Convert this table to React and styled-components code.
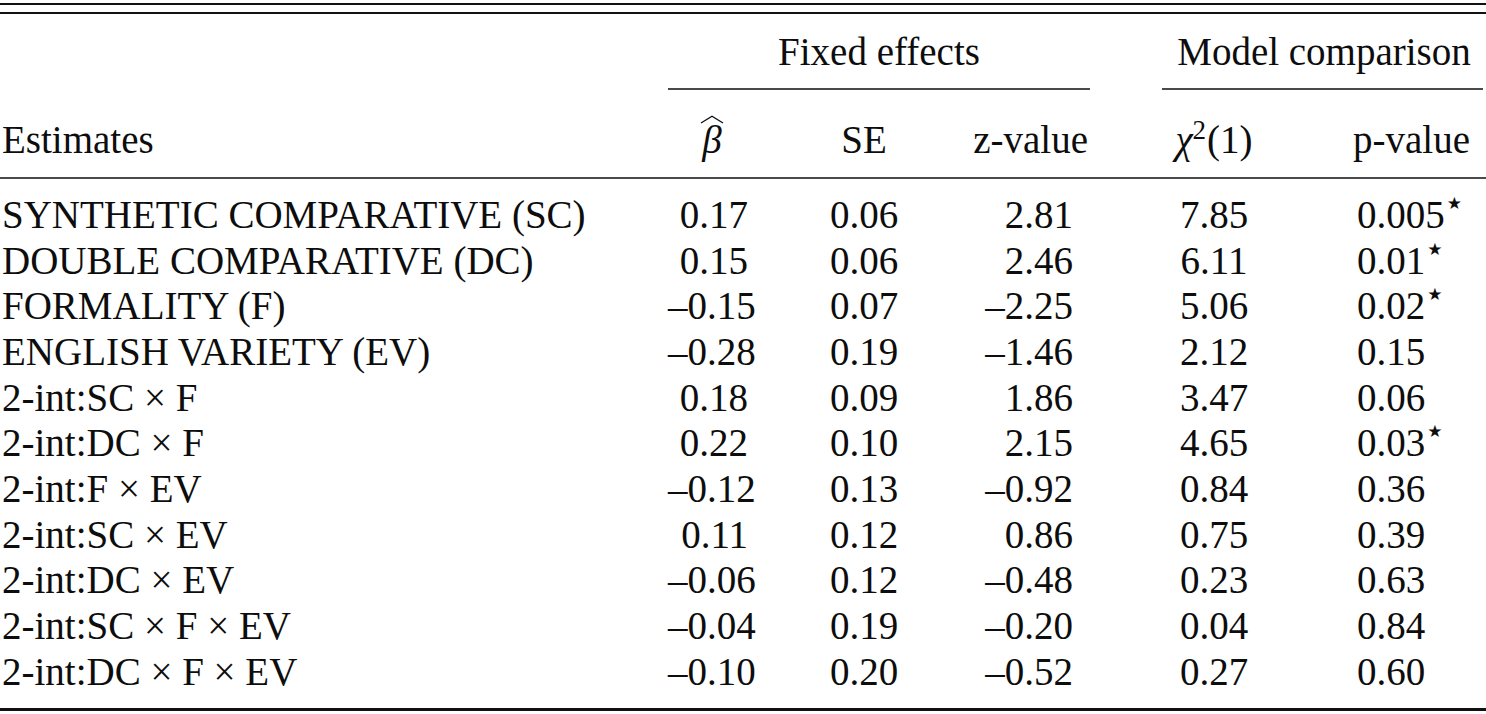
import styled, { createGlobalStyle } from "styled-components";

const GlobalStyle = createGlobalStyle`
  html, body {
    margin: 0;
    padding: 0;
    background: #fff;
  }
  body {
    font-family: "Liberation Serif", "Times New Roman", serif;
    color: #0d0d0d;
  }
`;

// shared column template: label | beta | SE | z | gap | chi2 | p
const COLUMNS = "668px 88px 216px 118px 72px 104px 220px";

const Table = styled.div`
  width: 1486px;
  display: flex;
  flex-direction: column;
  font-size: 39px;
`;

const Rule = styled.div`
  height: ${(p) => p.$h}px;
  margin-top: ${(p) => p.$top}px;
  background: ${(p) => p.$color || "#111"};
`;

const Row = styled.div`
  display: grid;
  grid-template-columns: ${COLUMNS};
  height: 45.7px;
  line-height: 45.7px;
  margin-top: ${(p) => p.$top || 0}px;
  white-space: nowrap;
`;

const RuleRow = styled.div`
  display: grid;
  grid-template-columns: ${COLUMNS};
  height: 2px;
  margin-top: ${(p) => p.$top || 0}px;
`;

const Cell = styled.div`
  grid-column: ${(p) => p.$col};
  text-align: ${(p) => p.$align || "left"};
  padding-left: ${(p) => p.$pl || 0}px;
  padding-right: ${(p) => p.$pr || 0}px;
`;

const Segment = styled.div`
  grid-column: ${(p) => p.$col};
  margin-right: ${(p) => p.$mr || 0}px;
  background: #4a4a4a;
`;

const HatWrap = styled.span`
  position: relative;
  display: inline-block;
  font-style: italic;
`;

const HatMark = styled.svg`
  position: absolute;
  left: 50%;
  top: -2px;
  transform: translateX(-50%);
`;

const Italic = styled.span`
  font-style: italic;
`;

const Sup = styled.span`
  font-size: 27px;
  position: relative;
  top: -14px;
  margin-right: 1px;
`;

const Star = styled.span`
  display: inline-block;
  font-family: "DejaVu Sans", sans-serif;
  font-size: 17px;
  line-height: 17px;
  vertical-align: baseline;
  position: relative;
  top: -19px;
  margin-left: 2px;
`;

const rows = [
  ["SYNTHETIC COMPARATIVE (SC)", "0.17", "0.06", "2.81", "7.85", "0.005", true],
  ["DOUBLE COMPARATIVE (DC)", "0.15", "0.06", "2.46", "6.11", "0.01", true],
  ["FORMALITY (F)", "–0.15", "0.07", "–2.25", "5.06", "0.02", true],
  ["ENGLISH VARIETY (EV)", "–0.28", "0.19", "–1.46", "2.12", "0.15"],
  ["2-int:SC × F", "0.18", "0.09", "1.86", "3.47", "0.06"],
  ["2-int:DC × F", "0.22", "0.10", "2.15", "4.65", "0.03", true],
  ["2-int:F × EV", "–0.12", "0.13", "–0.92", "0.84", "0.36"],
  ["2-int:SC × EV", "0.11", "0.12", "0.86", "0.75", "0.39"],
  ["2-int:DC × EV", "–0.06", "0.12", "–0.48", "0.23", "0.63"],
  ["2-int:SC × F × EV", "–0.04", "0.19", "–0.20", "0.04", "0.84"],
  ["2-int:DC × F × EV", "–0.10", "0.20", "–0.52", "0.27", "0.60"],
];

const BetaHat = () => (
  <HatWrap>
    <HatMark width="24" height="9" viewBox="0 0 24 9">
      <path d="M1 8 L12 1.2 L23 8" fill="none" stroke="#111" strokeWidth="1.4" />
    </HatMark>
    β
  </HatWrap>
);

const App = () => {
  return (
    <>
      <GlobalStyle />
      <Table>
        {/* double top rule */}
        <Rule $top={3} $h={2} />
        <Rule $top={7} $h={2} />

        {/* group headings */}
        <Row $top={15}>
          <Cell $col="2 / 5" $align="center">Fixed effects</Cell>
          <Cell $col="6 / 8" $align="center">Model comparison</Cell>
        </Row>
        <RuleRow $top={13.3}>
          <Segment $col="2 / 5" />
          <Segment $col="6 / 8" $mr={3} />
        </RuleRow>

        {/* column headings */}
        <Row $top={27}>
          <Cell $col="1" $pl={2}>Estimates</Cell>
          <Cell $col="2" $align="center"><BetaHat /></Cell>
          <Cell $col="3" $align="center">SE</Cell>
          <Cell $col="4" $align="right" $pr={2}>z-value</Cell>
          <Cell $col="6" $align="center">
            <Italic>χ</Italic><Sup>2</Sup>(1)
          </Cell>
          <Cell $col="7" $pl={87}>p-value</Cell>
        </Row>
        <Rule $top={14.3} $h={2} $color="#4a4a4a" />

        {/* body */}
        {rows.map(([label, beta, se, z, chi, p, sig], i) => (
          <Row key={label} $top={i === 0 ? 13 : 0}>
            <Cell $col="1" $pl={2}>{label}</Cell>
            <Cell $col="2" $align="right" $pr={8}>{beta}</Cell>
            <Cell $col="3" $align="center">{se}</Cell>
            <Cell $col="4" $align="right" $pr={17}>{z}</Cell>
            <Cell $col="6" $align="center">{chi}</Cell>
            <Cell $col="7" $pl={91}>
              {p}
              {sig && <Star>★</Star>}
            </Cell>
          </Row>
        ))}
        <Rule $top={13.3} $h={3} />
      </Table>
    </>
  );
};

export default App;
